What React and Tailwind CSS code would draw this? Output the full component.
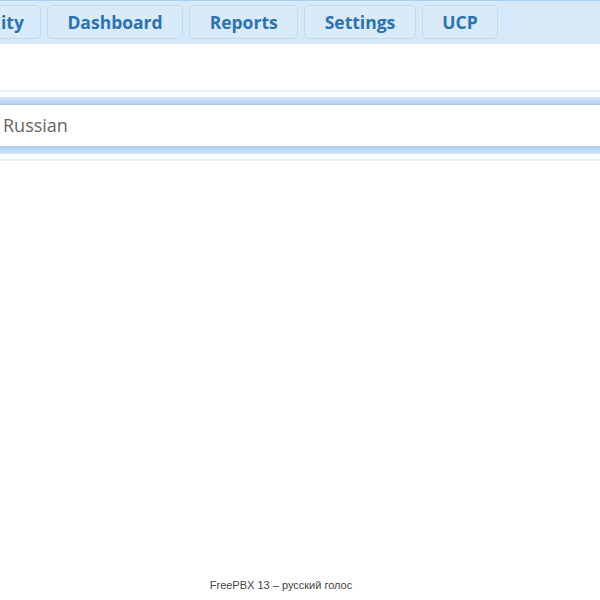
export default function App() {
  const tabs = ["Dashboard", "Reports", "Settings", "UCP"];

  return (
    <div className="w-[600px] h-[600px] bg-white flex flex-col overflow-hidden font-['Open_Sans',sans-serif]">
      {/* top nav */}
      <div className="h-[44px] bg-[#d7eaf9] border-t border-[#a9d0f1] flex items-start gap-[6px] pt-[4px] shrink-0">
        <div className="-ml-[4px] h-[34px] pl-[4px] pr-[16px] flex items-center bg-[#d9ebf9] border border-[#bddbf3] rounded-[5px] text-[17.5px] font-bold text-[#2a72b5]">
          ity
        </div>
        {tabs.map((t) => (
          <div
            key={t}
            className="h-[34px] px-[19.5px] flex items-center bg-[#d9ebf9] border border-[#bddbf3] rounded-[5px] text-[17.5px] font-bold text-[#2a72b5]"
          >
            {t}
          </div>
        ))}
      </div>

      {/* blank row */}
      <div className="h-[46px] shrink-0" />

      {/* language row */}
      <div className="h-[2px] bg-[#e3eff9] shrink-0" />
      <div className="h-[5px] shrink-0" />
      <div className="h-[8px] bg-gradient-to-b from-[#d4e7f7] to-[#a8cdee] shrink-0" />
      <div className="h-[41px] flex items-center pl-[3px] text-[18px] text-[#666] shrink-0">
        Russian
      </div>
      <div className="h-[8px] bg-gradient-to-b from-[#a8cdee] to-[#d4e7f7] shrink-0" />
      <div className="h-[5px] shrink-0" />
      <div className="h-[2px] bg-[#e3eff9] shrink-0" />

      <div className="flex-1" />

      {/* footer */}
      <div className="h-[23px] flex items-start justify-center pr-[38px] text-[11px] text-[#444] font-['Liberation_Sans',Arial,sans-serif] shrink-0">
        FreePBX 13 – русский голос
      </div>
    </div>
  );
}
